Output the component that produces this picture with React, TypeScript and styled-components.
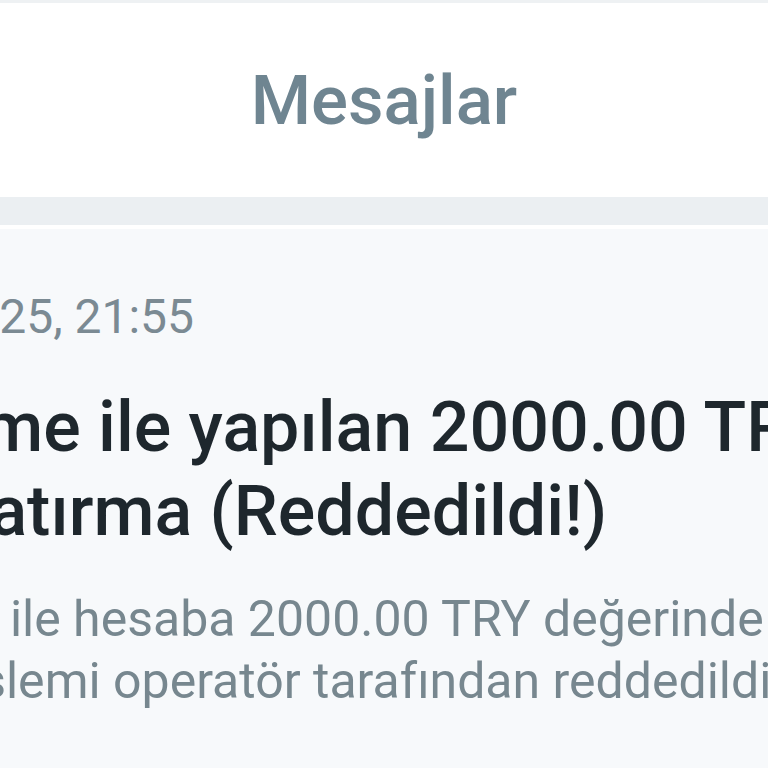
import styled, { createGlobalStyle } from 'styled-components'

const GlobalStyle = createGlobalStyle`
  html, body {
    margin: 0;
    padding: 0;
    background: #f7f9fb;
    overflow: hidden;
  }
  body {
    font-family: Roboto, "Noto Sans", "Liberation Sans", sans-serif;
  }
`

const Screen = styled.div`
  width: 768px;
  height: 768px;
  display: flex;
  flex-direction: column;
  overflow: hidden;
  background: #f7f9fb;
`

const StatusEdge = styled.div`
  height: 3px;
  background: #eef1f3;
`

const Header = styled.header`
  height: 194px;
  background: #ffffff;
  display: flex;
  align-items: center;
  justify-content: center;
`

const Title = styled.h1`
  margin: 0;
  font-size: 69px;
  font-weight: 500;
  color: #6f8591;
`

const Divider = styled.div`
  height: 28px;
  background: #ebeff2;
  border-bottom: 4px solid #ffffff;
`

const Card = styled.section`
  flex: 1;
  background: #f7f9fb;
  display: flex;
  flex-direction: column;
  padding-top: 58px;
  overflow: hidden;
`

const Line = styled.div<{ shift: number }>`
  white-space: nowrap;
  margin-left: ${p => p.shift}px;
`

const DateLine = styled(Line)`
  font-size: 48px;
  line-height: 60px;
  color: #7b8a93;
  margin-bottom: 38px;
`

const HeadLine = styled(Line)`
  font-size: 70px;
  line-height: 84px;
  font-weight: 500;
  color: #1e272d;
`

const BodyText = styled.div`
  margin-top: 35px;
`

const BodyLine = styled(Line)`
  font-size: 50px;
  line-height: 62px;
  color: #77878f;
`

export default function App() {
  return (
    <Screen>
      <GlobalStyle />
      <StatusEdge />
      <Header>
        <Title>Mesajlar</Title>
      </Header>
      <Divider />
      <Card>
        <DateLine shift={-188}>12.03.2025, 21:55</DateLine>
        <HeadLine shift={-143}>Ödeme ile yapılan 2000.00 TRY Para</HeadLine>
        <HeadLine shift={-51}>Yatırma (Reddedildi!)</HeadLine>
        <BodyText>
          <BodyLine shift={-162}>Ödeme ile hesaba 2000.00 TRY değerinde para yatırma</BodyLine>
          <BodyLine shift={-32}>işlemi operatör tarafından reddedildi.</BodyLine>
        </BodyText>
      </Card>
    </Screen>
  )
}
